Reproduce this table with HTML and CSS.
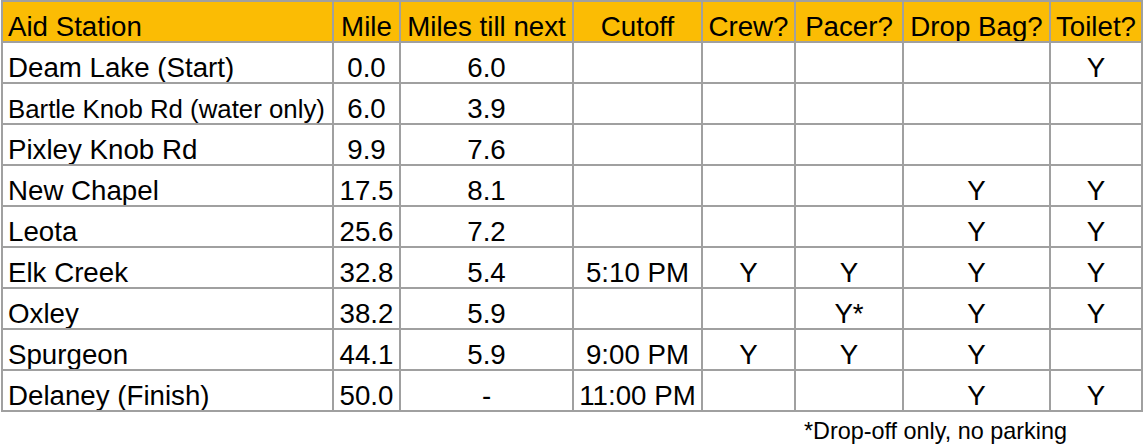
FILE: index.html
```html
<!DOCTYPE html>
<html>
<head>
<meta charset="utf-8">
<link rel="stylesheet" href="styles.css">
</head>
<body>
<table class="aid">
  <colgroup>
    <col class="c-name"><col class="c-mile"><col class="c-next"><col class="c-cut">
    <col class="c-crew"><col class="c-pacer"><col class="c-bag"><col class="c-toilet">
  </colgroup>
  <thead>
    <tr>
      <th class="left">Aid Station</th><th>Mile</th><th>Miles till next</th><th>Cutoff</th>
      <th>Crew?</th><th>Pacer?</th><th>Drop Bag?</th><th>Toilet?</th>
    </tr>
  </thead>
  <tbody>
    <tr><td class="left">Deam Lake (Start)</td><td>0.0</td><td>6.0</td><td></td><td></td><td></td><td></td><td>Y</td></tr>
    <tr><td class="left small">Bartle Knob Rd (water only)</td><td>6.0</td><td>3.9</td><td></td><td></td><td></td><td></td><td></td></tr>
    <tr><td class="left">Pixley Knob Rd</td><td>9.9</td><td>7.6</td><td></td><td></td><td></td><td></td><td></td></tr>
    <tr><td class="left">New Chapel</td><td>17.5</td><td>8.1</td><td></td><td></td><td></td><td>Y</td><td>Y</td></tr>
    <tr><td class="left">Leota</td><td>25.6</td><td>7.2</td><td></td><td></td><td></td><td>Y</td><td>Y</td></tr>
    <tr><td class="left">Elk Creek</td><td>32.8</td><td>5.4</td><td>5:10 PM</td><td>Y</td><td>Y</td><td>Y</td><td>Y</td></tr>
    <tr><td class="left">Oxley</td><td>38.2</td><td>5.9</td><td></td><td></td><td>Y*</td><td>Y</td><td>Y</td></tr>
    <tr><td class="left">Spurgeon</td><td>44.1</td><td>5.9</td><td>9:00 PM</td><td>Y</td><td>Y</td><td>Y</td><td></td></tr>
    <tr><td class="left">Delaney (Finish)</td><td>50.0</td><td>-</td><td>11:00 PM</td><td></td><td></td><td>Y</td><td>Y</td></tr>
  </tbody>
</table>
<p class="note">*Drop-off only, no parking</p>
</body>
</html>
```
FILE: styles.css
```css
html, body {
  margin: 0;
  padding: 0;
  background: #ffffff;
}
body {
  font-family: "Liberation Sans", Arial, sans-serif;
  color: #000000;
  width: 1143px;
  height: 446px;
  overflow: hidden;
}
.aid {
  margin: 0 0 0 1px;
  width: 1142px;
  table-layout: fixed;
  border-collapse: separate;
  border-spacing: 0;
  border-top: 2px solid #a0a0a0;
  border-left: 2px solid #a0a0a0;
  font-size: 27.7px;
  line-height: 28px;
}
.c-name { width: 331px; }
.c-mile { width: 67px; }
.c-next { width: 173px; }
.c-cut { width: 129px; }
.c-crew { width: 93px; }
.c-pacer { width: 108px; }
.c-bag { width: 147px; }
.c-toilet { width: 92px; }
.aid th,
.aid td {
  box-sizing: border-box;
  border-right: 2px solid #a0a0a0;
  border-bottom: 2px solid #a0a0a0;
  padding: 0 3px;
  text-align: center;
  vertical-align: bottom;
  white-space: nowrap;
  overflow: hidden;
  font-weight: normal;
  height: 41px;
}
.aid th {
  background: #fbbc04;
}
.aid .left {
  text-align: left;
  padding-left: 5px;
}
.aid .small {
  font-size: 25.8px;
}
.note {
  margin: 6px 0 0 0;
  padding-right: 76px;
  text-align: right;
  font-size: 23.4px;
  line-height: normal;
}
```
